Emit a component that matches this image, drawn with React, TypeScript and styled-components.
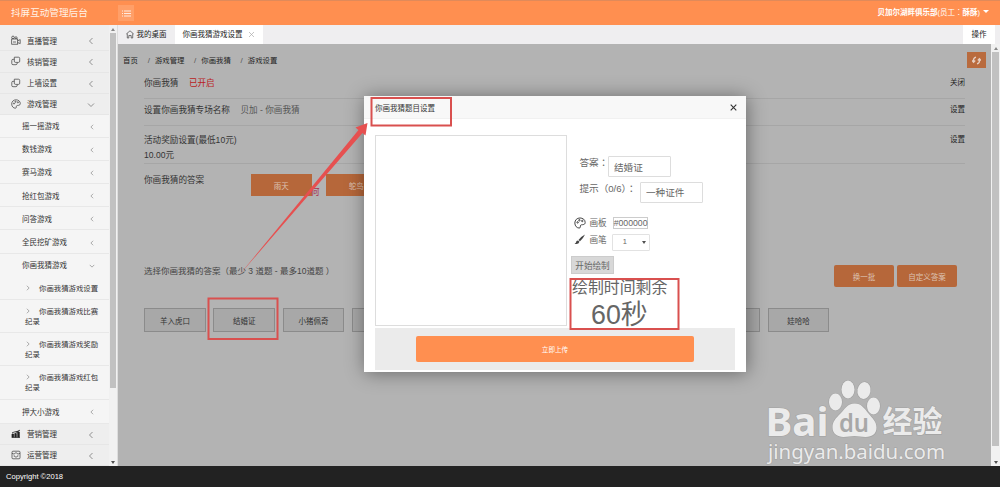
import React from 'react';
import styled, { createGlobalStyle } from 'styled-components';

const Global = createGlobalStyle`
  *, *::before, *::after { box-sizing: border-box; }
  body { margin: 0; overflow: hidden; font-family: "Liberation Sans", "Noto Sans CJK SC", sans-serif; font-size: 7.5px; color: #333; }
  button, input { font-family: inherit; margin: 0; }
`;

const Page = styled.div`
  position: relative; width: 1000px; height: 487px; overflow: hidden;
  display: flex; flex-direction: column; background: #eee;
`;
const Header = styled.header`
  height: 25px; flex: none; background: #ff8f50; color: #fff; border-top: 1px solid #e08a5a;
  display: flex; align-items: center; padding: 0 12px 1px 11px;
`;
const Brand = styled.div`font-size: 9.6px; width: 107px; white-space: nowrap; color: #fff3e8; margin-top: -2px;`;
const MenuToggle = styled.div`
  width: 16px; height: 16px; background: #ff9f68; display: flex; align-items: center; justify-content: center; margin-top: 1px;
`;
const Account = styled.div`
  margin-left: auto; display: flex; align-items: center; gap: 3px; font-size: 7.5px; line-height: 12px; white-space: nowrap;
  svg { margin-top: -2px; margin-right: -1px; }
`;
const Wide = styled.span`font-family: "Liberation Sans", "Noto Sans CJK TC", sans-serif;`;
const Body = styled.div`height: 441px; flex: none; display: flex;`;
const Side = styled.nav`width: 109px; flex: none; background: #eee; overflow: hidden; padding-top: 5px;`;
const Group = styled.div<{ $h?: number }>`
  height: ${p => p.$h ?? 21}px; display: flex; align-items: center; padding: 0 14px 0 11px;
  border-bottom: 1px solid #e6e6e6; color: #333;
  > svg:first-child { margin-right: 6px; }
  > svg:last-child { margin-left: auto; margin-top: 2px; }
`;
const SubList = styled.div`background: #f5f5f5;`;
const Sub = styled.div<{ $h?: number; $open?: boolean }>`
  height: ${p => p.$h ?? 23.2}px; display: flex; align-items: center; padding: 0 14px 0 22px;
  border-bottom: 1px solid ${p => (p.$open ? 'transparent' : '#e8e8e8')};
  > svg { margin-left: auto; margin-top: 2px; }
`;
const Leaf = styled.div<{ $h: number }>`
  height: ${p => p.$h}px; padding: 7px 8px 0 25px; line-height: 10px; border-bottom: 1px solid #e8e8e8; font-size: 7.4px;
  svg { margin: 0 8px 0 0; }
`;
const Scroll = styled.div<{ $w: number; $thumb: number }>`
  width: ${p => p.$w}px; flex: none; background: #f1f1f1; display: flex; flex-direction: column;
  align-items: center; justify-content: space-between; padding: 3px 0 2px;
  > i { width: ${p => p.$w - 1.5}px; height: ${p => p.$thumb}px; background: #c1c1c1; margin-top: 2px; margin-bottom: auto; }
  > svg { flex: none; }
`;
const Main = styled.main`flex: 1; min-width: 0; display: flex; flex-direction: column; border-left: 1px solid #ddd;`;
const Tabs = styled.div`
  height: 19px; flex: none; display: flex; background: #efeef0; color: #222; line-height: 18px; white-space: nowrap;
`;
const Tab = styled.div<{ $active?: boolean; $w: number }>`
  width: ${p => p.$w}px; display: flex; align-items: center; gap: ${p => (p.$active ? 6 : 3)}px; padding-left: 7.5px;
  background: ${p => (p.$active ? '#fff' : 'transparent')};
`;
const Operate = styled.div`margin-left: auto; margin-right: 5px; width: 32px; background: #fff; text-align: center; padding-top: 1px;`;
const Frame = styled.div`flex: 1; min-height: 0; display: flex;`;
const Content = styled.section`flex: 1; background: #b3b3b3; overflow: hidden;`;
const CrumbBar = styled.div`height: 24px; display: flex; align-items: flex-end; justify-content: space-between; padding: 0 5px 0 5px;`;
const Crumbs = styled.div`
  display: flex; line-height: 12px; color: #222; padding-bottom: 1px; white-space: nowrap; font-size: 7.4px;
  span + span::before { content: "/"; margin: 0 5px 0 9.6px; color: #555; font-size: 8px; }
  span:first-child { margin-right: 0.3px; }
`;
const Refresh = styled.div`
  width: 19px; height: 16px; background: #b96b3e; display: flex; align-items: center; justify-content: center;
`;
const Settings = styled.div`margin: 0 26px; font-size: 8.6px; color: #333;`;
const Setting = styled.div<{ $h: number; $pt: number; $last?: boolean }>`
  height: ${p => p.$h}px; padding-top: ${p => p.$pt}px; display: flex; line-height: 12px; white-space: nowrap;
  border-bottom: 1px solid ${p => (p.$last ? 'transparent' : '#a6a6a6')};
`;
const Value = styled.span<{ $red?: boolean }>`margin-left: 10.5px; color: ${p => (p.$red ? '#b91c22' : '#555')};`;
const Action = styled.span`margin-left: auto; font-size: 7.5px; color: #222;`;
const Amount = styled.div`margin-top: 3px;`;
const Chosen = styled.div`display: flex; gap: 14px; margin-left: 46.5px;`;
const OrangeButton = styled.button<{ $round?: boolean }>`
  width: ${p => (p.$round ? 60 : 61)}px; height: 22px; border: 0; padding: 0; background: #b6673a; color: #dcc3b3; font-size: 7.5px;
  border-radius: ${p => (p.$round ? 2 : 0)}px;
`;
const PickBar = styled.div`
  height: 22px; margin-top: 65px; padding-right: 8px; display: flex; align-items: center; gap: 3px; color: #444; white-space: nowrap;
  > span { margin-right: auto; margin-top: -12px; font-size: 8.5px; }
`;
const Options = styled.div`display: flex; gap: 7.5px; margin-top: 21px;`;
const Option = styled.button`
  width: 61.8px; height: 24px; flex: none; border: 1px solid #8b8b8b; background: #a8a8a8; color: #333; font-size: 7.5px; padding: 0;
`;
const Footer = styled.footer`flex: 1; background: #222; color: #fff; padding: 5px 6px; line-height: 12px; font-size: 7.6px;`;

const Dialog = styled.div`
  position: absolute; left: 364px; top: 96px; width: 382px; height: 276px; background: #fff;
  box-shadow: 1px 1px 18px rgba(0, 0, 0, .42); color: #666;
`;
const DialogHead = styled.div`
  height: 23px; background: #f8f8f8; border-bottom: 1px solid #f1f1f1; display: flex; align-items: center; justify-content: space-between;
  padding: 0 9px 0 11px; color: #333;
`;
const DialogBody = styled.div`display: flex; padding: 16px 10px 0 11px; height: 209px;`;
const Board = styled.div`width: 192px; height: 191px; border: 1px solid #ddd; flex: none;`;
const Form = styled.div`flex: 1; padding-left: 4px; white-space: nowrap;`;
const Field = styled.div<{ $gap: number }>`
  display: flex; height: 21px; margin-top: ${p => p.$gap}px; padding-left: 8.5px; font-size: 9.6px; line-height: 13px;
`;
const TextInput = styled.input`
  width: 63px; height: 21px; border: 1px solid #ddd; border-radius: 1px; padding: 0 5px; font-size: 9.6px; color: #666; background: #fff;
`;
const FieldName = styled(Wide)<{ $w: number }>`width: ${p => p.$w}px; flex: none;`;
const Tools = styled.div`padding-top: 14px;`;
const Tool = styled.div<{ $h: number }>`
  height: ${p => p.$h}px; display: flex; padding-left: 2.5px; font-size: 8.6px; line-height: 12px;
  > svg { flex: none; margin-right: 4px; }
`;
const Color = styled.span`
  height: 12px; border: 1px solid #ccc; margin-left: 6px; line-height: 11px; font-size: 8.7px; width: 35px;
`;
const Select = styled.span`
  width: 38px; height: 17px; border: 1px solid #e2e2e2; margin: 0 0 0 5px; border-radius: 1px; display: flex; align-items: center;
  justify-content: space-between; padding: 0 3px 0 10px; font-size: 7.5px;
`;
const Start = styled.button`
  width: 43px; height: 18px; border: 1px solid #ccc; background: #d8d8d8; color: #666; font-size: 8.6px; padding: 0; display: block;
`;
const Countdown = styled.div`
  width: 108px; color: #666; font-size: 15.9px; line-height: 20px; padding: 4px 0 0 1px;
  strong { display: block; font-weight: 400; font-size: 26.8px; line-height: 34px; padding-left: 19px; }
`;
const DialogFoot = styled.div`
  height: 42px; margin: 0 11px; background: #ebebeb; display: flex; align-items: center; justify-content: center;
`;
const Submit = styled.button`width: 278px; height: 26px; border: 0; border-radius: 2px; background: #ff8f50; color: #fff; font-size: 6.6px;`;
const Overlay = styled.svg`position: absolute; left: 0; top: 0; pointer-events: none;`;

const Chev = ({ d = 'left', s = 8 }: { d?: 'left' | 'right' | 'down'; s?: number }) => (
  <svg width={s} height={s} viewBox="0 0 8 8" fill="none" stroke="#777" strokeWidth=".8">
    <path d={d === 'left' ? 'M5.5 1 2.5 4l3 3' : d === 'right' ? 'M2.5 1l3 3-3 3' : 'M1 2.5l3 3 3-3'} />
  </svg>
);
const Tri = ({ up = false, w = 5, c = '#505050' }: { up?: boolean; w?: number; c?: string }) => (
  <svg width={w} height="3" viewBox="0 0 6 3" preserveAspectRatio="none"><path d={up ? 'M0 3 3 0l3 3z' : 'M0 0h6L3 3z'} fill={c} /></svg>
);
const paths: Record<string, React.ReactNode> = {
  video: <><rect x=".7" y="4" width="6" height="5.2" /><circle cx="2" cy="2.4" r="1.3" /><circle cx="5" cy="2.7" r="1" /><path d="M6.7 5.8 9.2 4.6v4L6.7 7.6M2 7h3" /></>,
  copy: <><path d="M3.3 1.2h4.2q1.2 0 1.2 1.2v2.8q0 1.2-1.2 1.2H4.6q-1.3 0-1.3-1.2z" /><path d="M3.3 3.3H2Q.8 3.3.8 4.5v3q0 1.2 1.2 1.2h3q1.2 0 1.4-2" /></>,
  palette: <><path d="M5 .8C2.4.8.7 2.6.7 5c0 2.6 1.8 4.2 3.6 4.2 1.5 0 .7-1.6 1.2-2.3.7-1 3.8.3 3.8-2.4C9.3 2.3 7.4.8 5 .8z" /><circle cx="3" cy="4.5" r=".6" /><circle cx="4.5" cy="2.7" r=".6" /><circle cx="6.9" cy="3.3" r=".6" /></>,
  chart: <path fill="#222" d="M1 5h1.500v3H1zM3.800 4.500h1.500V8H3.800zM6.700 3h1.600v5H6.700zM.6 8.500h8.400M1 3.800l3-1 2 .5L9 1" />,
  ops: <><rect x="1" y="1.2" width="8" height="7.6" rx="1" /><path d="M1 3.300l2 .8 2-1.500 2 1.500 2-.8M3 5.800q2 3 4 0M3 5.500v.8M7 5.500v.8" /></>,
};
const Icon = ({ n, s = 10, c = '#444' }: { n: string; s?: number; c?: string }) => (
  <svg width={s} height={s} viewBox="0 0 10 10" fill="none" stroke={c} strokeWidth=".75">{paths[n]}</svg>
);

const games = ['摇一摇游戏', '数钱游戏', '赛马游戏', '抢红包游戏', '问答游戏', '全民挖矿游戏'];
const options = ['羊入虎口', '结婚证', '小猪佩奇', '', '', '', '', '', '', '娃哈哈'];

export default function App() {
  return (
    <Page>
      <Global />
      <Header>
        <Brand>抖屏互动管理后台</Brand>
        <MenuToggle>
          <svg width="9" height="7" stroke="#fff" strokeWidth=".8"><path d="M0 1h1m1 0h7M0 3.500h1m1 0h7M0 6h1m1 0h7" /></svg>
        </MenuToggle>
        <Account><Wide><b>贝加尔湖畔俱乐部</b>(员工：<b>酥酥</b>)</Wide><Tri w={6} c="#fff" /></Account>
      </Header>
      <Body>
        <Side>
          <Group><Icon n="video" />直播管理<Chev /></Group>
          <Group $h={21.5}><Icon n="copy" />核销管理<Chev /></Group>
          <Group><Icon n="copy" />上墙设置<Chev /></Group>
          <Group><Icon n="palette" />游戏管理<Chev d="down" /></Group>
          <SubList>
            {games.map(g => <Sub key={g}>{g}<Chev s={6} /></Sub>)}
            <Sub $open>你画我猜游戏<Chev d="down" s={6} /></Sub>
            <Leaf $h={23}><Chev d="right" s={6} />你画我猜游戏设置</Leaf>
            <Leaf $h={33.3}><Chev d="right" s={6} />你画我猜游戏比赛纪录</Leaf>
            <Leaf $h={33.3}><Chev d="right" s={6} />你画我猜游戏奖励纪录</Leaf>
            <Leaf $h={33.3}><Chev d="right" s={6} />你画我猜游戏红包纪录</Leaf>
            <Sub $h={24}>押大小游戏<Chev s={6} /></Sub>
          </SubList>
          <Group><Icon n="chart" c="#222" />营销管理<Chev /></Group>
          <Group><Icon n="ops" />运营管理<Chev /></Group>
        </Side>
        <Scroll $w={8} $thumb={355}><Tri up w={4} c="#888" /><i /><Tri w={4} /></Scroll>
        <Main>
          <Tabs>
            <Tab $w={57}>
              <svg width="8" height="9" viewBox="0 0 8 9" fill="none" stroke="#444" strokeWidth=".7"><path d="M.3 4 4 .8 7.700 4M1.300 3.500V8h1.500V5.500h2.400V8h1.500V3.500" /></svg>
              我的桌面
            </Tab>
            <Tab $active $w={88}>
              你画我猜游戏设置
              <svg width="5" height="5" stroke="#aaa" strokeWidth=".7"><path d="M0 0l5 5M5 0 0 5" /></svg>
            </Tab>
            <Operate>操作</Operate>
          </Tabs>
          <Frame>
            <Content>
              <CrumbBar>
                <Crumbs><span>首页</span><span>游戏管理</span><span>你画我猜</span><span>游戏设置</span></Crumbs>
                <Refresh>
                  <svg width="9" height="9" viewBox="0 0 9 9" fill="none" stroke="#e6cfc2" strokeWidth="1.3"><path d="M4 1.200Q1 2 1.500 5.500M0 4.500l1.600 1.700L3.200 4.500M5 7.800Q8 7 7.500 3.500M5.800 4.500l1.600-1.700L9 4.500" /></svg>
                </Refresh>
              </CrumbBar>
              <Settings>
                <Setting $h={30.5} $pt={9}>你画我猜<Value $red>已开启</Value><Action>关闭</Action></Setting>
                <Setting $h={27.5} $pt={5.5}>设置你画我猜专场名称<Value>贝加 - 你画我猜</Value><Action>设置</Action></Setting>
                <Setting $h={38} $pt={7.5}><div>活动奖励设置(最低10元)<Amount>10.00元</Amount></div><Action>设置</Action></Setting>
                <Setting $h={36} $pt={10} $last>你画我猜的答案<Chosen><OrangeButton>雨天</OrangeButton><OrangeButton>鸵鸟</OrangeButton></Chosen></Setting>
                <PickBar>
                  <span>选择你画我猜的答案（最少 3 道题 - 最多10道题 ）</span>
                  <OrangeButton $round>换一批</OrangeButton><OrangeButton $round>自定义答案</OrangeButton>
                </PickBar>
                <Options>{options.map((o, i) => <Option key={i}>{o}</Option>)}</Options>
              </Settings>
            </Content>
            <Scroll $w={9} $thumb={394}><Tri up w={4} c="#888" /><i /><Tri w={4} /></Scroll>
          </Frame>
        </Main>
      </Body>
      <Footer>Copyright ©2018</Footer>

      <Dialog>
        <DialogHead>
          你画我猜题目设置
          <svg width="7" height="7" stroke="#333" strokeWidth="1.1"><path d="M.7.7l5.600 5.600M6.300.7.7 6.300" /></svg>
        </DialogHead>
        <DialogBody>
          <Board />
          <Form>
            <Field $gap={21}><FieldName $w={28.5}>答案：</FieldName><TextInput defaultValue="结婚证" /></Field>
            <Field $gap={4.5}><FieldName $w={60.5}>提示（0/6）：</FieldName><TextInput defaultValue="一种证件" /></Field>
            <Tools>
              <Tool $h={17}><Icon n="palette" s={12} c="#333" />画板<Color>#000000</Color></Tool>
              <Tool $h={22.5}>
                <svg width="12" height="11" viewBox="0 0 12 11" fill="#444"><path d="M11 .5Q7 2.500 4.500 6L6 7.300Q9.500 4 11 .5zM4 6.500Q2 6.500 2 8.500 1.500 9.500.5 9.800q4 1 5-2z" /></svg>
                画笔<Select>1<Tri w={4} /></Select>
              </Tool>
            </Tools>
            <Start>开始绘制</Start>
            <Countdown>绘制时间剩余<strong>60秒</strong></Countdown>
          </Form>
        </DialogBody>
        <DialogFoot><Submit>立即上传</Submit></DialogFoot>
      </Dialog>

      <Overlay width="1000" height="487" viewBox="0 0 1000 487">
        <text x="310.5" y="195" fontSize="9" fill="#a92f4f">何</text>
        <g fill="none" stroke="#d9504f" strokeWidth="2">
          <rect x="371.5" y="98" width="79.5" height="27.5" />
          <rect x="208.5" y="298.5" width="69" height="40.5" />
          <rect x="570.5" y="279" width="108" height="50" />
        </g>
        <path d="M238.500 276 358.500 130l-3-2.500L367.500 123l-2 12.500-3-2.500z" fill="#e65050" />
        <g fill="#ebebeb" stroke="#a2a2a2" strokeWidth="1.2" paintOrder="stroke">
          <text x="765.5" y="435.5" fontFamily="Noto Sans" fontWeight="700" fontSize="40" textLength="63" lengthAdjust="spacingAndGlyphs">Bai</text>
          <ellipse cx="835.5" cy="402" rx="6.5" ry="8.5" />
          <ellipse cx="848" cy="389.5" rx="6.5" ry="9" />
          <ellipse cx="864" cy="390.5" rx="6.5" ry="8.5" transform="rotate(10 864 390.5)" />
          <ellipse cx="873.5" cy="406" rx="6.5" ry="8.5" />
          <path d="M854.500 403.500c-7 0-10 6-14 10-5 5-8 8-8 14 0 6 5 9.500 11 9.500 4 0 7-1 11-1s7 1 11 1c7 0 11-3.500 11-9.500 0-6-4-9-8-14-4-5-7-10-14-10z" />
          <text x="882.5" y="432" fontFamily="Noto Sans CJK SC" fontWeight="700" fontSize="30">经验</text>
          <text x="768" y="459" fontFamily="Noto Sans" fontSize="20" textLength="177" lengthAdjust="spacingAndGlyphs">jingyan.baidu.com</text>
        </g>
        <text x="839" y="431.5" fontFamily="Noto Sans" fontWeight="600" fontSize="25" fill="#a8a8a8" textLength="30" lengthAdjust="spacingAndGlyphs">du</text>
      </Overlay>
    </Page>
  );
}
